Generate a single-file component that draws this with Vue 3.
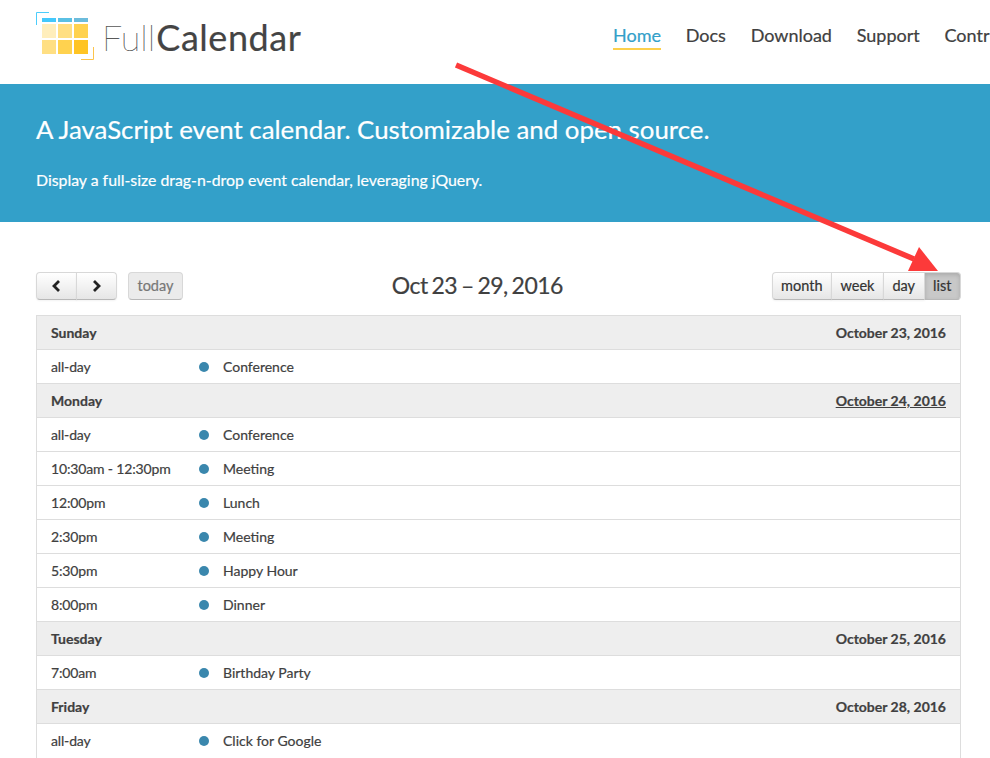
<script setup>
const days = [
  { name: 'Sunday', date: 'October 23, 2016', events: [['all-day', 'Conference']] },
  { name: 'Monday', date: 'October 24, 2016', link: true, events: [
    ['all-day', 'Conference'], ['10:30am - 12:30pm', 'Meeting'], ['12:00pm', 'Lunch'],
    ['2:30pm', 'Meeting'], ['5:30pm', 'Happy Hour'], ['8:00pm', 'Dinner']] },
  { name: 'Tuesday', date: 'October 25, 2016', events: [['7:00am', 'Birthday Party']] },
  { name: 'Friday', date: 'October 28, 2016', events: [['all-day', 'Click for Google']] }
]
const navItems = ['Home', 'Docs', 'Download', 'Support', 'Contribute']
const views = ['month', 'week', 'day', 'list']
const logoCells = [
  ['#ffeebc', '#ffdf83', '#ffd24f'],
  ['#ffdf83', '#ffd24f', '#ffc423']
]
</script>

<template>
  <div class="page">
    <header class="top">
      <div class="brand">
        <svg class="logo" width="60" height="62" viewBox="0 0 60 62">
          <path d="M.5 13V.5H13" fill="none" stroke="#4ccdfc" stroke-width="1" />
          <rect x="6" y="6" width="14" height="4" fill="#44c8fc" />
          <rect x="22" y="6" width="14" height="4" fill="#5ac0e4" />
          <rect x="38" y="6" width="14" height="4" fill="#6cbcdc" />
          <g v-for="(row, r) in logoCells" :key="r">
            <rect v-for="(c, i) in row" :key="i" :x="6 + i * 16" :y="12 + r * 16" width="14" height="14" :fill="c" />
          </g>
          <path d="M45 47.5H57.5V35" fill="none" stroke="#fcc44c" stroke-width="1" />
        </svg>
        <span class="word"><span class="light">Full</span>Calendar</span>
      </div>
      <nav class="nav">
        <a v-for="(n, i) in navItems" :key="n" :class="{ on: i === 0 }">{{ n }}</a>
      </nav>
    </header>

    <section class="hero">
      <h1>A JavaScript event calendar. Customizable and open source.</h1>
      <p>Display a full-size drag-n-drop event calendar, leveraging jQuery.</p>
    </section>

    <main class="cal">
      <div class="toolbar">
        <div class="left">
          <div class="group">
            <button class="btn nav-btn">
              <svg class="prev" width="10" height="14" viewBox="0 0 10 14"><path d="M8 2 3 7l5 5" fill="none" stroke="#222" stroke-width="2.8" /></svg>
            </button>
            <button class="btn nav-btn">
              <svg width="10" height="14" viewBox="0 0 10 14"><path d="M2 2l5 5-5 5" fill="none" stroke="#222" stroke-width="2.8" /></svg>
            </button>
          </div>
          <button class="btn today">today</button>
        </div>
        <h2>Oct 23 – 29, 2016</h2>
        <div class="group">
          <button v-for="v in views" :key="v" class="btn view" :class="{ active: v === 'list' }">{{ v }}</button>
        </div>
      </div>

      <div class="list">
        <template v-for="d in days" :key="d.name">
          <div class="day">
            <span>{{ d.name }}</span>
            <span :class="{ under: d.link }">{{ d.date }}</span>
          </div>
          <div v-for="(e, i) in d.events" :key="i" class="row">
            <span class="time">{{ e[0] }}</span>
            <span class="dot"></span>
            <span>{{ e[1] }}</span>
          </div>
        </template>
      </div>
    </main>

    <svg class="arrow" width="990" height="758" viewBox="0 0 990 758">
      <path d="M456 65 914 259" fill="none" stroke="#fc3a3a" stroke-width="5.5" />
      <path d="M938 271 908 271 919 247Z" fill="#fc3a3a" />
    </svg>
  </div>
</template>

<style>
html, body { margin: 0; background: #fff; overflow: hidden; }
</style>

<style scoped>
.page {
  position: relative;
  width: 990px;
  height: 758px;
  overflow: hidden;
  font-family: Lato, "Liberation Sans", sans-serif;
  color: #404040;
  background: #fff;
  -webkit-text-stroke: 0.2px;
}
.top {
  height: 84px;
  display: flex;
  justify-content: space-between;
  padding-left: 36px;
}
.brand { display: flex; align-items: flex-start; padding-top: 12px; }
.logo { flex: none; }
.word {
  font-size: 36px;
  line-height: 50px;
  margin-left: 6px;
  color: #444;
  letter-spacing: 0.55px;
}
.light { font-weight: 100; color: #333; margin-right: 1px; letter-spacing: 0; }
.nav {
  display: flex;
  gap: 24.75px;
  width: 377px;
  flex: none;
  padding-top: 24px;
  white-space: nowrap;
  overflow: hidden;
  font-size: 18px;
  line-height: 22px;
}
.nav a { height: 24px; color: #404040; }
.nav a.on { color: #33a0c9; border-bottom: 2px solid #fdd04b; }
.hero {
  height: 138px;
  box-sizing: border-box;
  padding: 29px 36px 0;
  background: #33a0c9;
  color: #fff;
}
.hero h1 { margin: 0; font-size: 25.85px; line-height: 32px; font-weight: 400; }
.hero p { margin: 25px 0 0; font-size: 15.85px; line-height: 20px; }
.cal { padding: 49px 29px 0 36px; }
.toolbar {
  display: flex;
  justify-content: space-between;
  align-items: flex-end;
  height: 29px;
  margin-bottom: 15px;
}
.toolbar h2 {
  margin: 0;
  font-size: 23px;
  line-height: 29px;
  font-weight: 400;
  letter-spacing: -0.55px;
  word-spacing: -1.5px;
  color: #404040;
}
.left { display: flex; gap: 11px; }
.group { display: flex; }
.btn {
  height: 28px;
  padding: 0 0 1px;
  font: 14.5px Lato, sans-serif;
  color: #333;
  background: linear-gradient(#fff, #e6e6e6);
  border: 1px solid #d8d8d8;
  border-bottom-color: #b8b8b8;
  box-shadow: inset 0 1px 0 rgba(255,255,255,.2), 0 1px 2px rgba(0,0,0,.05);
  display: flex;
  align-items: center;
  justify-content: center;
}
.group .btn + .btn { margin-left: -1px; }
.group .btn:first-child { border-radius: 4px 0 0 4px; }
.group .btn:last-child { border-radius: 0 4px 4px 0; }
.nav-btn { width: 41px; }
.prev { margin-left: -2px; }
.today {
  width: 55px;
  border-radius: 4px;
  color: #777;
  background: #ebebeb;
  box-shadow: none;
}
.view { padding: 0 8.5px 1px; }
.view.active {
  background: #c8c8c8;
  box-shadow: inset 0 2px 4px rgba(0,0,0,.15);
}
.list {
  border: 1px solid #ddd;
  border-bottom: none;
  font-size: 14px;
}
.day, .row {
  height: 34px;
  box-sizing: border-box;
  display: flex;
  align-items: center;
  padding: 0 14px;
  border-bottom: 1px solid #ddd;
}
.row:last-child { border-bottom-color: transparent; }
.day {
  justify-content: space-between;
  background: #eee;
  font-weight: 700;
  color: #404040;
}
.under { text-decoration: underline; }
.time { width: 148px; flex: none; letter-spacing: -0.15px; }
.dot {
  width: 10px;
  height: 10px;
  border-radius: 50%;
  background: #3a87ad;
  margin-right: 14px;
  flex: none;
}
.arrow { position: absolute; left: 0; top: 0; pointer-events: none; }
</style>
